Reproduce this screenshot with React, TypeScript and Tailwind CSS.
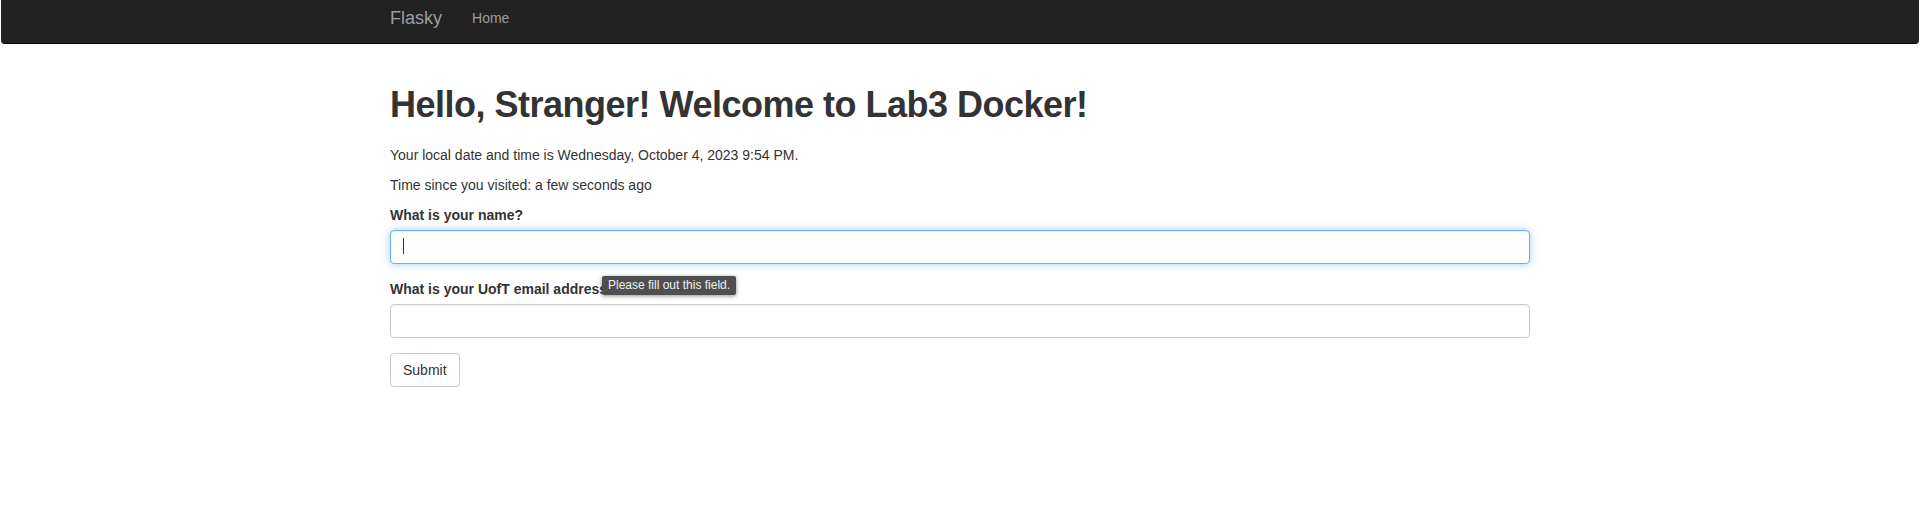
export default function App() {
  return (
    <div className="min-h-[520px] bg-white font-['Liberation_Sans',Arial,sans-serif] text-[14px] leading-[20px] text-[#333]">
      {/* Navbar */}
      <nav className="mx-px h-[44px] rounded-b-[4px] border-b border-[#080808] bg-[#222]">
        <div className="mx-auto flex h-full w-[1170px] items-center px-[15px] pb-[7px]">
          <a className="text-[18px] leading-[20px] text-[#9d9d9d]">Flasky</a>
          <a className="ml-[30px] text-[14px] text-[#9d9d9d]">Home</a>
        </div>
      </nav>

      {/* Page body */}
      <div className="mx-auto w-[1170px] px-[15px]">
        <h1 className="mb-[20px] mt-[41px] text-[36px] font-bold leading-[39.6px] tracking-[-0.5px] text-[#333]">
          Hello, Stranger! Welcome to Lab3 Docker!
        </h1>
        <p className="mb-[10px]">Your local date and time is Wednesday, October 4, 2023 9:54 PM.</p>
        <p className="mb-[10px]">Time since you visited: a few seconds ago</p>

        <form>
          <div className="mb-[15px]">
            <label className="mb-[5px] block font-bold">What is your name?</label>
            <div className="relative">
              <input
                type="text"
                readOnly
                className="block h-[34px] w-full rounded-[4px] border border-[#66afe9] px-[12px] py-[6px] shadow-[inset_0_1px_1px_rgba(0,0,0,0.075),0_0_8px_rgba(102,175,233,0.6)] outline-none"
              />
              <span className="absolute left-[13px] top-[8px] h-[16px] w-px bg-[#333]" />
            </div>
          </div>

          <div className="relative mb-[15px]">
            <label className="mb-[5px] block font-bold">What is your UofT email address?</label>
            <input
              type="text"
              readOnly
              className="block h-[34px] w-full rounded-[4px] border border-[#ccc] px-[12px] py-[6px] shadow-[inset_0_1px_1px_rgba(0,0,0,0.075)] outline-none"
            />
            {/* Validation bubble */}
            <div className="absolute left-[212px] top-[-3px] flex h-[19px] items-center rounded-[2px] bg-[#4f4f4f] px-[6px] text-[12px] leading-none text-[#f2f2f2] shadow-[0_1px_4px_rgba(0,0,0,0.45)]">
              Please fill out this field.
            </div>
          </div>

          <button
            type="button"
            className="h-[34px] rounded-[4px] border border-[#ccc] bg-white px-[12px] text-[14px] text-[#333]"
          >
            Submit
          </button>
        </form>
      </div>
    </div>
  );
}
